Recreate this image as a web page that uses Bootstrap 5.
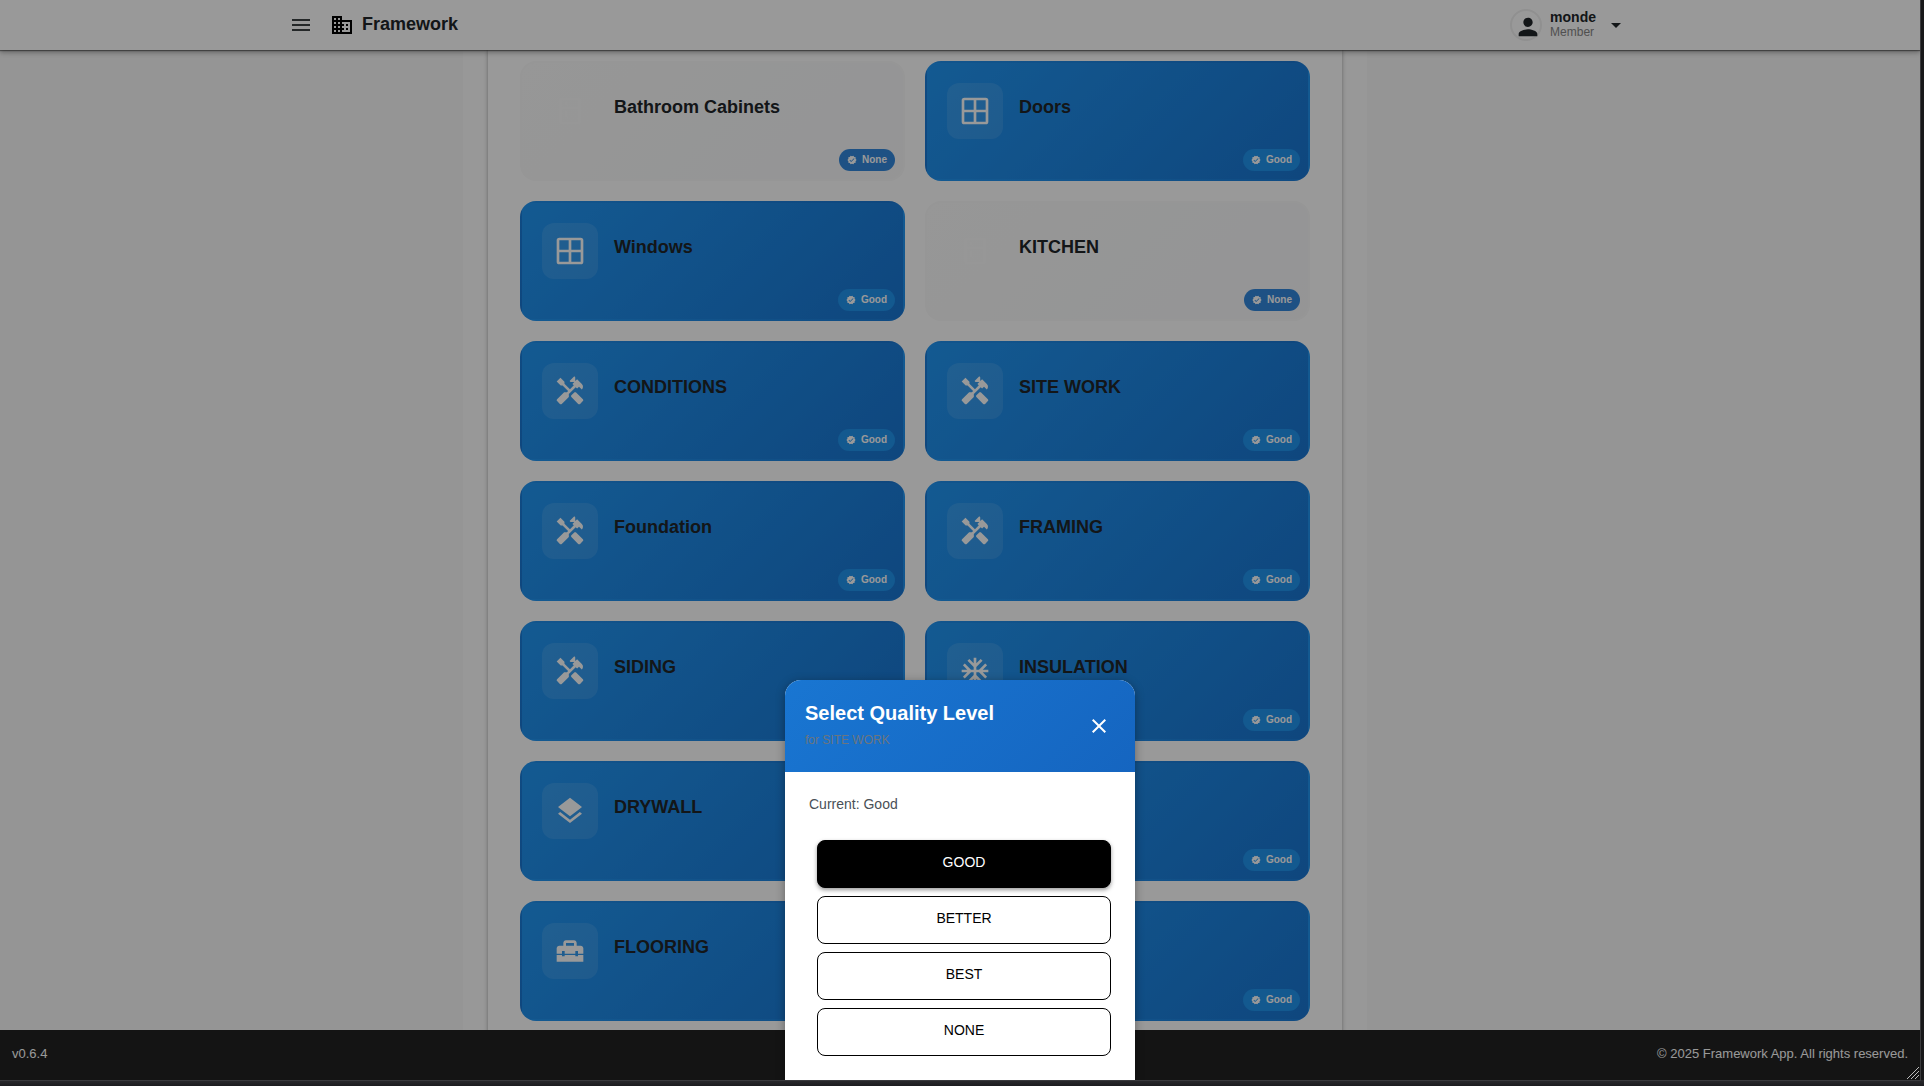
<!DOCTYPE html>
<html lang="en">
<head>
<meta charset="utf-8">
<meta name="viewport" content="width=device-width, initial-scale=1">
<title>Framework</title>
<link href="https://cdn.jsdelivr.net/npm/bootstrap@5.3.0/dist/css/bootstrap.min.css" rel="stylesheet">
<style>
  body { font-family: "Liberation Sans", Arial, sans-serif; background: #1c1c1f; color: #212529; }
  svg { fill: currentColor; flex: none; display: block; }
  /* window chrome around the app */
  .window-frame { height: 100vh; padding: 0 4px 6px 0; background: linear-gradient(#2b2b2e, #1c1c1f) bottom / 100% 6px no-repeat #18181a; }
  .app-shell { height: 100%; background: #f9f9f9; box-shadow: 0 0 0 1px #3a3a3d; }
  .top-bar { height: 50px; background: #fff; z-index: 2; box-shadow: 0 1px 1px rgba(0,0,0,.4), 0 2px 4px rgba(0,0,0,.2), 0 4px 5px rgba(0,0,0,.08), 0 1px 10px rgba(0,0,0,.1); }
  .top-inner { max-width: 1342px; padding-right: 3px; }
  .menu-btn { color: #3d4144; margin-right: 17px; }
  .brand-name { font-size: 18px; line-height: 22px; padding-bottom: 2px; }
  .avatar { width: 32px; height: 32px; border: 2px solid #f0f0f0; padding: 2px; }
  .user-name { font-size: 14px; line-height: 16px; }
  .user-role { font-size: 12px; line-height: 14px; padding-bottom: 2px; color: #868686; }
  .page-area { padding-right: 90px; min-height: 0; flex: 1 1 0; }
  .content-band { max-width: 904px; padding: 0 25px; background: #fdfdfd; }
  .content-panel { padding: 11px 32px 40px; background: #fff; box-shadow: 0 0 4px rgba(0,0,0,.35); }
  .tile-list { display: grid; grid-template-columns: 1fr 1fr; gap: 20px; }
  .tile { height: 120px; padding: 20px; gap: 16px; border: 2px solid transparent; border-radius: 16px; background: linear-gradient(135deg, #2196f3, #1976d2); color: inherit; text-align: left; }
  .tile-plain { background: linear-gradient(135deg, #fcfcfc, #f9fafa 50%, #f8f8fa 90%, #f9f9f9); border-color: #fbfbfb; }
  .tile-icon { width: 56px; height: 56px; border-radius: 12px; background: rgba(255,255,255,.1); color: #fff; }
  .tile-plain .tile-icon { background: none; color: #fcfcfc; }
  .tile-name { font-size: 18px; line-height: 22px; padding-top: 13px; }
  .level { right: 8px; bottom: 8px; height: 22px; padding: 0 8px; gap: 5px; border-radius: 11px; background: #2094ee; color: #fff; font-size: 10px; line-height: 22px; }
  .tile-plain .level { background: #3388dc; }
  .bottom-bar { height: 50px; padding: 0 12px 2px; background: #222; color: #fff; font-size: 13px; z-index: 2; }
  .grip { right: 0; bottom: 0; z-index: 6; }
  .scrim { background: rgba(0,0,0,.4); z-index: 5; }
  .sheet { width: 350px; border-radius: 16px 16px 0 0; background: #fff; box-shadow: 0 2px 10px rgba(0,0,0,.35); }
  .sheet-head { height: 92px; padding: 0 24px 0 20px; background: linear-gradient(135deg, #1976d2, #1565c0); color: #fff; }
  .sheet-title { font-size: 20px; line-height: 26px; }
  .sheet-sub { font-size: 12px; line-height: 20px; padding-bottom: 2px; margin-top: 4px; color: #6c757d; }
  .sheet-body { padding: 22px 24px 24px; }
  .current { font-size: 14px; line-height: 20px; color: #495057; margin-bottom: 26px; }
  .options { gap: 8px; padding-left: 8px; }
  .option-btn { height: 48px; padding: 0 16px 4px; border: 1px solid #000; border-radius: 8px; background: #fff; color: #000; font-size: 14px; }
  .option-btn.chosen { background: #000; color: #fff; box-shadow: 0 2px 4px rgba(0,0,0,.4); }
</style>
<script src="https://cdn.jsdelivr.net/npm/bootstrap@5.3.0/dist/js/bootstrap.bundle.min.js"></script>
</head>
<body>
<svg class="d-none" aria-hidden="true">
  <symbol id="i-tools" viewBox="0 0 24 24"><path d="M21.67 18.17l-5.3-5.3h-.99l-2.54 2.54v.99l5.3 5.3c.39.39 1.02.39 1.41 0l2.12-2.12c.39-.38.39-1.02 0-1.41z"/><path d="M17.34 10.19l1.41-1.41 2.12 2.12c1.17-1.17 1.17-3.07 0-4.24l-3.54-3.54-1.41 1.41V1.71L15.22 1l-3.54 3.54.71.71h2.83l-1.41 1.41 1.06 1.06-2.89 2.89-4.13-4.13V5.06L4.83 2.04 2 4.87 5.03 7.9h1.41l4.13 4.13-.85.85H7.6l-5.3 5.3c-.39.39-.39 1.02 0 1.41l2.12 2.12c.39.39 1.02.39 1.41 0l5.3-5.3v-2.12l5.15-5.15 1.06 1.05z"/></symbol>
  <symbol id="i-window" viewBox="0 0 24 24"><g fill="none" stroke="currentColor" stroke-width="2"><rect x="3" y="3" width="18" height="18" rx="1"/><path d="M12 3v18M3 12h18"/></g></symbol>
  <symbol id="i-snow" viewBox="0 0 24 24"><path d="M22 11h-4.17l3.24-3.24-1.41-1.42L15 11h-2V9l4.66-4.66-1.42-1.41L13 6.17V2h-2v4.17L7.76 2.93 6.34 4.34 11 9v2H9L4.34 6.34 2.93 7.76 6.17 11H2v2h4.17l-3.24 3.24 1.41 1.42L9 13h2v2l-4.66 4.66 1.42 1.41L11 17.83V22h2v-4.17l3.24 3.24 1.42-1.41L13 15v-2h2l4.66 4.66 1.41-1.42L17.83 13H22z"/></symbol>
  <symbol id="i-layers" viewBox="0 0 24 24"><path d="M11.99 18.54l-7.37-5.73L3 14.07l9 7 9-7-1.63-1.27-7.38 5.74zM12 16l7.36-5.73L21 9l-9-7-9 7 1.63 1.27L12 16z"/></symbol>
  <symbol id="i-toolbox" viewBox="0 0 24 24"><path d="M18 16h-2v-1H8v1H6v-1H2v5h20v-5h-4v1zM20 8h-3V6c0-1.1-.9-2-2-2H9c-1.1 0-2 .9-2 2v2H4c-1.1 0-2 .9-2 2v4h4v-2h2v2h8v-2h2v2h4v-4c0-1.1-.9-2-2-2zm-5 0H9V6h6v2z"/></symbol>
  <symbol id="i-fridge" viewBox="0 0 24 24"><path d="M18 2.01L6 2c-1.1 0-2 .89-2 2v16c0 1.1.9 2 2 2h12c1.1 0 2-.9 2-2V4c0-1.1-.9-1.99-2-1.99zM18 20H6v-9.02h12V20zm0-11H6V4h12v5zM8 5h2v3H8V5zm0 7h2v5H8v-5z"/></symbol>
  <symbol id="i-check" viewBox="0 0 24 24"><path d="M23 12l-2.44-2.78.34-3.68-3.61-.82-1.89-3.18L12 3 8.6 1.54 6.71 4.72l-3.61.81.34 3.68L1 12l2.44 2.78-.34 3.69 3.61.82 1.89 3.18L12 21l3.4 1.46 1.89-3.18 3.61-.82-.34-3.68L23 12zm-13 5l-4-4 1.41-1.41L10 14.17l6.59-6.59L18 9l-8 8z"/></symbol>
</svg>

<div class="window-frame">
  <div class="app-shell position-relative d-flex flex-column overflow-hidden">

    <header class="top-bar flex-shrink-0 position-relative d-flex justify-content-center">
      <div class="top-inner w-100 d-flex align-items-center">
        <button type="button" class="menu-btn btn p-0 border-0" aria-label="Menu"><svg width="24" height="24" viewBox="0 0 24 24"><path d="M3 18h18v-2H3v2zm0-5h18v-2H3v2zm0-7v2h18V6H3z"/></svg></button>
        <svg class="text-black me-2" width="24" height="24" viewBox="0 0 24 24"><path d="M12 7V3H2v18h20V7H12zM6 19H4v-2h2v2zm0-4H4v-2h2v2zm0-4H4V9h2v2zm0-4H4V5h2v2zm4 12H8v-2h2v2zm0-4H8v-2h2v2zm0-4H8V9h2v2zm0-4H8V5h2v2zm10 12h-8v-2h2v-2h-2v-2h2v-2h-2V9h8v10zm-2-8h-2v2h2v-2zm0 4h-2v2h2v-2z"/></svg>
        <span class="brand-name fw-bold">Framework</span>
        <button type="button" class="btn p-0 border-0 ms-auto d-flex align-items-center gap-2 text-start" aria-label="Account menu">
          <span class="avatar rounded-circle"><svg width="28" height="28" viewBox="0 0 24 24"><path d="M12 12c2.210 0 4-1.790 4-4s-1.790-4-4-4-4 1.790-4 4 1.790 4 4 4zm0 2c-2.670 0-8 1.340-8 4v2h16v-2c0-2.660-5.330-4-8-4z"/></svg></span>
          <span class="d-flex flex-column"><span class="user-name fw-bold">monde</span><span class="user-role">Member</span></span>
          <svg width="24" height="24" viewBox="0 0 24 24"><path d="M7 10l5 5 5-5z"/></svg>
        </button>
      </div>
    </header>

    <main class="page-area overflow-hidden">
      <div class="content-band mx-auto">
        <div class="content-panel">
          <div class="tile-list">
            <button type="button" class="tile tile-plain position-relative d-flex align-items-start"><span class="tile-icon d-flex align-items-center justify-content-center"><svg width="32" height="32"><use href="#i-fridge"/></svg></span><span class="tile-name fw-bold">Bathroom Cabinets</span><span class="level position-absolute d-flex align-items-center fw-bold"><svg width="10" height="10"><use href="#i-check"/></svg>None</span></button>
            <button type="button" class="tile position-relative d-flex align-items-start"><span class="tile-icon d-flex align-items-center justify-content-center"><svg width="32" height="32"><use href="#i-window"/></svg></span><span class="tile-name fw-bold">Doors</span><span class="level position-absolute d-flex align-items-center fw-bold"><svg width="10" height="10"><use href="#i-check"/></svg>Good</span></button>
            <button type="button" class="tile position-relative d-flex align-items-start"><span class="tile-icon d-flex align-items-center justify-content-center"><svg width="32" height="32"><use href="#i-window"/></svg></span><span class="tile-name fw-bold">Windows</span><span class="level position-absolute d-flex align-items-center fw-bold"><svg width="10" height="10"><use href="#i-check"/></svg>Good</span></button>
            <button type="button" class="tile tile-plain position-relative d-flex align-items-start"><span class="tile-icon d-flex align-items-center justify-content-center"><svg width="32" height="32"><use href="#i-fridge"/></svg></span><span class="tile-name fw-bold">KITCHEN</span><span class="level position-absolute d-flex align-items-center fw-bold"><svg width="10" height="10"><use href="#i-check"/></svg>None</span></button>
            <button type="button" class="tile position-relative d-flex align-items-start"><span class="tile-icon d-flex align-items-center justify-content-center"><svg width="32" height="32"><use href="#i-tools"/></svg></span><span class="tile-name fw-bold">CONDITIONS</span><span class="level position-absolute d-flex align-items-center fw-bold"><svg width="10" height="10"><use href="#i-check"/></svg>Good</span></button>
            <button type="button" class="tile position-relative d-flex align-items-start"><span class="tile-icon d-flex align-items-center justify-content-center"><svg width="32" height="32"><use href="#i-tools"/></svg></span><span class="tile-name fw-bold">SITE WORK</span><span class="level position-absolute d-flex align-items-center fw-bold"><svg width="10" height="10"><use href="#i-check"/></svg>Good</span></button>
            <button type="button" class="tile position-relative d-flex align-items-start"><span class="tile-icon d-flex align-items-center justify-content-center"><svg width="32" height="32"><use href="#i-tools"/></svg></span><span class="tile-name fw-bold">Foundation</span><span class="level position-absolute d-flex align-items-center fw-bold"><svg width="10" height="10"><use href="#i-check"/></svg>Good</span></button>
            <button type="button" class="tile position-relative d-flex align-items-start"><span class="tile-icon d-flex align-items-center justify-content-center"><svg width="32" height="32"><use href="#i-tools"/></svg></span><span class="tile-name fw-bold">FRAMING</span><span class="level position-absolute d-flex align-items-center fw-bold"><svg width="10" height="10"><use href="#i-check"/></svg>Good</span></button>
            <button type="button" class="tile position-relative d-flex align-items-start"><span class="tile-icon d-flex align-items-center justify-content-center"><svg width="32" height="32"><use href="#i-tools"/></svg></span><span class="tile-name fw-bold">SIDING</span></button>
            <button type="button" class="tile position-relative d-flex align-items-start"><span class="tile-icon d-flex align-items-center justify-content-center"><svg width="32" height="32"><use href="#i-snow"/></svg></span><span class="tile-name fw-bold">INSULATION</span><span class="level position-absolute d-flex align-items-center fw-bold"><svg width="10" height="10"><use href="#i-check"/></svg>Good</span></button>
            <button type="button" class="tile position-relative d-flex align-items-start"><span class="tile-icon d-flex align-items-center justify-content-center"><svg width="32" height="32"><use href="#i-layers"/></svg></span><span class="tile-name fw-bold">DRYWALL</span></button>
            <button type="button" class="tile position-relative d-flex align-items-start"><span class="level position-absolute d-flex align-items-center fw-bold"><svg width="10" height="10"><use href="#i-check"/></svg>Good</span></button>
            <button type="button" class="tile position-relative d-flex align-items-start"><span class="tile-icon d-flex align-items-center justify-content-center"><svg width="32" height="32"><use href="#i-toolbox"/></svg></span><span class="tile-name fw-bold">FLOORING</span></button>
            <button type="button" class="tile position-relative d-flex align-items-start"><span class="level position-absolute d-flex align-items-center fw-bold"><svg width="10" height="10"><use href="#i-check"/></svg>Good</span></button>
          </div>
        </div>
      </div>
    </main>

    <footer class="bottom-bar flex-shrink-0 position-relative d-flex align-items-center justify-content-between">
      <span>v0.6.4</span><span>© 2025 Framework App. All rights reserved.</span>
    </footer>

    <div class="scrim position-absolute top-0 start-0 w-100 h-100 d-flex align-items-end justify-content-center">
      <section class="sheet overflow-hidden" role="dialog" aria-modal="true" aria-labelledby="sheet-title">
        <div class="sheet-head d-flex align-items-center justify-content-between">
          <div>
            <h2 class="sheet-title fw-bold m-0" id="sheet-title">Select Quality Level</h2>
            <div class="sheet-sub">for SITE WORK</div>
          </div>
          <button type="button" class="btn p-0 border-0 text-white" aria-label="Close"><svg width="24" height="24" viewBox="0 0 24 24"><path d="M19 6.410L17.590 5 12 10.590 6.410 5 5 6.410 10.590 12 5 17.590 6.410 19 12 13.410 17.590 19 19 17.590 13.410 12z"/></svg></button>
        </div>
        <div class="sheet-body">
          <p class="current">Current: Good</p>
          <div class="options d-flex flex-column">
            <button type="button" class="option-btn chosen">GOOD</button>
            <button type="button" class="option-btn">BETTER</button>
            <button type="button" class="option-btn">BEST</button>
            <button type="button" class="option-btn">NONE</button>
          </div>
        </div>
      </section>
    </div>
    <svg class="grip position-absolute" width="14" height="14" viewBox="0 0 14 14"><path d="M1 13L13 1M5 13l8-8M9 13l4-4" fill="none" stroke="#bbb" stroke-width="1"/></svg>
  </div>
</div>
</body>
</html>
